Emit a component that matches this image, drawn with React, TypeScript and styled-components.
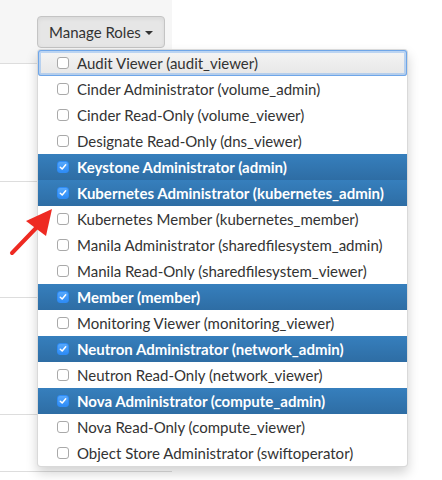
import styled, { createGlobalStyle, css } from 'styled-components';

const GlobalStyle = createGlobalStyle`
  html, body {
    margin: 0;
    padding: 0;
    background: #fff;
  }
  body {
    font-family: Lato, "Helvetica Neue", Arial, sans-serif;
    font-size: 15px;
    color: #333;
  }
`;

const Page = styled.div`
  position: relative;
  display: flex;
  width: 442px;
  height: 480px;
  overflow: hidden;
`;

const Table = styled.div`
  display: flex;
  flex-direction: column;
  width: 172px;
`;

const HeaderCell = styled.div`
  box-sizing: border-box;
  height: 64px;
  padding: 16px 0 0 37px;
  background: #f6f6f6;
  border-bottom: 1px solid #dddddd;
`;

const BodyCell = styled.div<{ $h: number }>`
  box-sizing: border-box;
  height: ${({ $h }) => $h}px;
  border-bottom: 1px solid #dddddd;
`;

const DropdownWrap = styled.div`
  position: relative;
  display: inline-block;
`;

const ToggleButton = styled.button`
  display: flex;
  align-items: center;
  gap: 4px;
  box-sizing: border-box;
  height: 32px;
  padding: 0 11px 0 11px;
  font-family: Lato, "Helvetica Neue", Arial, sans-serif;
  font-size: 15px;
  color: #333;
  background: #e6e6e6;
  border: 1px solid #c4c4c4;
  border-radius: 4px;
  box-shadow: inset 0 2px 4px rgba(0, 0, 0, 0.06);
  cursor: pointer;
`;

const Caret = styled.span`
  display: inline-block;
  width: 0;
  height: 0;
  border-top: 4px solid #333;
  border-left: 4px solid transparent;
  border-right: 4px solid transparent;
  margin-top: 1px;
`;

const Menu = styled.ul`
  position: absolute;
  top: 33px;
  left: 0;
  z-index: 10;
  box-sizing: border-box;
  width: 371px;
  margin: 0;
  padding: 0;
  list-style: none;
  background: #fff;
  border: 1px solid rgba(0, 0, 0, 0.15);
  border-radius: 4px;
  box-shadow: 0 6px 12px rgba(0, 0, 0, 0.175);
`;

const Item = styled.li<{ $checked?: boolean; $focused?: boolean }>`
  display: flex;
  align-items: center;
  gap: 8px;
  height: 26px;
  padding: 0 0 0 19px;
  white-space: nowrap;
  color: #333;

  ${({ $checked }) =>
    $checked &&
    css`
      color: #fff;
      font-weight: 700;
      background: linear-gradient(to bottom, #367fbd 0%, #2e6da4 100%);
    `}

  ${({ $focused }) =>
    $focused &&
    css`
      background: linear-gradient(to bottom, #f5f5f5 0%, #e6e6e6 100%);
      border-radius: 3px;
      box-shadow: inset 0 0 0 1px #6fa6e8, inset 0 0 0 3px rgba(140, 185, 240, 0.55);
    `}
`;

const Box = styled.span<{ $checked?: boolean }>`
  box-sizing: border-box;
  display: inline-flex;
  align-items: center;
  justify-content: center;
  flex: 0 0 auto;
  width: 12px;
  height: 12px;
  border-radius: 3px;
  border: 1px solid ${({ $checked }) => ($checked ? '#2f8cf6' : '#a9a9a9')};
  background: ${({ $checked }) =>
    $checked ? 'linear-gradient(to bottom, #57a8fc, #2e8cf6)' : '#fff'};
`;

const Arrow = styled.svg`
  position: absolute;
  left: 0;
  top: 0;
  z-index: 20;
  pointer-events: none;
`;

const roles = [
  { label: 'Audit Viewer (audit_viewer)', focused: true },
  { label: 'Cinder Administrator (volume_admin)' },
  { label: 'Cinder Read-Only (volume_viewer)' },
  { label: 'Designate Read-Only (dns_viewer)' },
  { label: 'Keystone Administrator (admin)', checked: true },
  { label: 'Kubernetes Administrator (kubernetes_admin)', checked: true },
  { label: 'Kubernetes Member (kubernetes_member)' },
  { label: 'Manila Administrator (sharedfilesystem_admin)' },
  { label: 'Manila Read-Only (sharedfilesystem_viewer)' },
  { label: 'Member (member)', checked: true },
  { label: 'Monitoring Viewer (monitoring_viewer)' },
  { label: 'Neutron Administrator (network_admin)', checked: true },
  { label: 'Neutron Read-Only (network_viewer)' },
  { label: 'Nova Administrator (compute_admin)', checked: true },
  { label: 'Nova Read-Only (compute_viewer)' },
  { label: 'Object Store Administrator (swiftoperator)' },
];

const CheckBox = ({ checked }: { checked?: boolean }) => (
  <Box $checked={checked}>
    {checked && (
      <svg width="8" height="8" viewBox="0 0 8 8">
        <path d="M1.3 4.2 L3.2 6 L6.7 1.8" fill="none" stroke="#fff" strokeWidth="1.5" strokeLinecap="round" strokeLinejoin="round" />
      </svg>
    )}
  </Box>
);

export default function App() {
  return (
    <>
      <GlobalStyle />
      <Page>
        <Table>
          <HeaderCell>
            <DropdownWrap>
              <ToggleButton>
                Manage Roles <Caret />
              </ToggleButton>
              <Menu>
                {roles.map((r) => (
                  <Item key={r.label} $checked={r.checked} $focused={r.focused}>
                    <CheckBox checked={r.checked} />
                    {r.label}
                  </Item>
                ))}
              </Menu>
            </DropdownWrap>
          </HeaderCell>
          <BodyCell $h={118} />
          <BodyCell $h={116} />
          <BodyCell $h={117} />
          <BodyCell $h={57} />
        </Table>
        <Arrow width="442" height="480" viewBox="0 0 442 480">
          <line x1="12" y1="253" x2="38" y2="226" stroke="#ee2a22" strokeWidth="4" strokeLinecap="round" />
          <polygon points="52,209 26,221 46,236" fill="#ee2a22" />
        </Arrow>
      </Page>
    </>
  );
}
